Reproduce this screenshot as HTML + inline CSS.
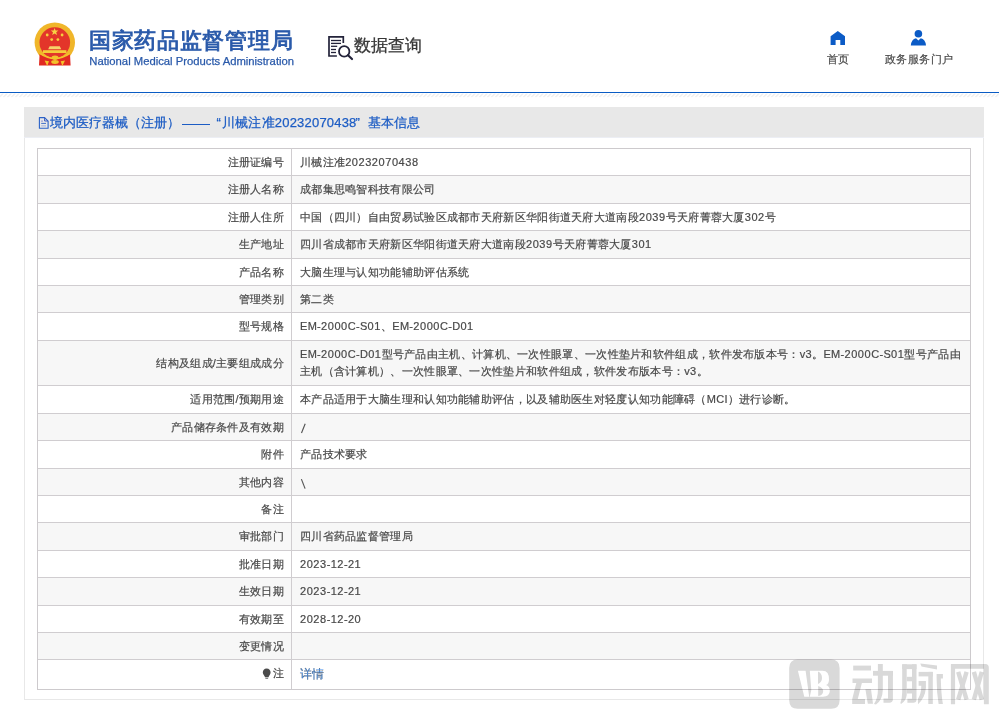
<!DOCTYPE html>
<html><head><meta charset="utf-8">
<style>
html,body{margin:0;padding:0;background:#fff;width:999px;height:719px;overflow:hidden;position:relative;font-family:"Liberation Sans",sans-serif;text-spacing-trim:space-all;}
.a{position:absolute;}
.hd-cn{left:89px;top:25.5px;font-size:22px;font-weight:normal;color:#2a5aaa;-webkit-text-stroke:0.9px #2a5aaa;white-space:nowrap;line-height:30px;letter-spacing:0.7px;}
.hd-en{left:89.3px;top:53.2px;font-size:11.27px;color:#2a5aaa;-webkit-text-stroke:0.25px #2a5aaa;white-space:nowrap;line-height:16px;}
.sjcx{left:353.5px;top:33px;font-size:17px;color:#383838;-webkit-text-stroke:0.3px #383838;white-space:nowrap;line-height:26px;}
.nav{font-size:11px;letter-spacing:0.55px;color:#4a4a4a;-webkit-text-stroke:0.2px #4a4a4a;white-space:nowrap;line-height:14px;}
.blue-line{left:0;top:91.5px;width:999px;height:1.5px;background:#0a5cc4;}
.panel{left:24px;top:107px;width:960px;height:593px;border:1px solid #e8e8e8;border-top:none;box-sizing:border-box;}
.ph{left:24px;top:107px;width:960px;height:30px;background:#e8e8e8;border-bottom:1px solid #eceef4;}
.ptitle{top:114px;font-size:13px;color:#1c5cc4;-webkit-text-stroke:0.25px #1c5cc4;white-space:nowrap;line-height:18px;}
.row{position:absolute;left:37px;width:934px;border-top:1px solid #d0cdd0;box-sizing:border-box;}
.row.g{background:#f7f7f7;}
.lab{position:absolute;right:687px;font-size:11px;letter-spacing:0.3px;line-height:16px;color:#484848;-webkit-text-stroke:0.2px #484848;white-space:nowrap;text-align:right;}
.d{letter-spacing:0.55px;}
.val{position:absolute;left:263px;font-size:11px;letter-spacing:0.3px;line-height:16px;color:#484848;-webkit-text-stroke:0.2px #484848;white-space:nowrap;}
.tb{left:37px;top:148px;width:934px;height:542px;border:1px solid #cdcacd;box-sizing:border-box;}
.vline{left:291px;top:148px;width:1px;height:541px;background:#d0cdd0;}
</style></head><body>

<!-- emblem -->
<svg class="a" style="left:30px;top:18px" width="50" height="52" viewBox="30 18 50 52">
  <circle cx="54.8" cy="42.6" r="20.2" fill="#f0b62a"/>
  <circle cx="54.8" cy="42.6" r="15.3" fill="#e3352a"/>
  <polygon points="54.6,27.9 55.6,30.6 58.4,30.6 56.2,32.3 57,35 54.6,33.4 52.2,35 53,32.3 50.8,30.6 53.6,30.6" fill="#f7d444"/>
  <circle cx="47.2" cy="35" r="1.4" fill="#f5cf3e"/>
  <circle cx="62.1" cy="35" r="1.4" fill="#f5cf3e"/>
  <circle cx="51.7" cy="39.6" r="1.4" fill="#f5cf3e"/>
  <circle cx="57.9" cy="39.6" r="1.4" fill="#f5cf3e"/>
  <polygon points="48.2,49.2 49.6,46.2 59.8,46.2 61.2,49.2" fill="#f7d46a"/>
  <rect x="43" y="50.2" width="23.4" height="2.8" fill="#f5cc3a"/>
  <path d="M39.6 54 L55 60 L70 54 L70.6 65.6 L39 65.6 Z" fill="#e12a22"/>
  <path d="M40.2 53.6 Q55 63.5 69.6 53.6" fill="none" stroke="#f3c22c" stroke-width="1.7"/>
  <ellipse cx="55" cy="57.6" rx="3.4" ry="2" fill="#f3c22c"/>
  <polygon points="44.6,60.4 49,61.2 47.2,66" fill="#f3c22c"/>
  <polygon points="65,60.4 60.6,61.2 62.4,66" fill="#f3c22c"/>
  <ellipse cx="55" cy="62" rx="3.8" ry="1.9" fill="#f3c22c"/>
</svg>
<div class="a hd-cn">国家药品监督管理局</div>
<div class="a hd-en">National Medical Products Administration</div>

<!-- search icon -->
<svg class="a" style="left:320px;top:30px" width="40" height="35" viewBox="320 30 40 35">
  <path d="M336.9 56 H329 V36.9 H343.3 V43.1" fill="none" stroke="#23233a" stroke-width="1.7"/>
  <line x1="331" y1="40.5" x2="341" y2="40.5" stroke="#23233a" stroke-width="1.3"/>
  <line x1="331" y1="43.4" x2="341" y2="43.4" stroke="#23233a" stroke-width="1.3"/>
  <line x1="331" y1="46.3" x2="337.2" y2="46.3" stroke="#23233a" stroke-width="1.3"/>
  <line x1="331" y1="49.5" x2="336" y2="49.5" stroke="#23233a" stroke-width="1.3"/>
  <line x1="331" y1="52.5" x2="336" y2="52.5" stroke="#23233a" stroke-width="1.3"/>
  <circle cx="344.2" cy="51.4" r="5.2" fill="none" stroke="#23233a" stroke-width="1.8"/>
  <line x1="348" y1="55.3" x2="352" y2="59" stroke="#23233a" stroke-width="2.2" stroke-linecap="round"/>
</svg>
<div class="a sjcx">数据查询</div>

<!-- nav -->
<svg class="a" style="left:829px;top:29px" width="18" height="18" viewBox="0 0 18 18">
  <path d="M1.6 7.25 L8.8 1.9 L16 7.25 V15.9 H11.3 V11 H6.6 V15.9 H1.6 Z" fill="#0b5bc6"/>
</svg>
<div class="a nav" style="left:826.6px;top:51.5px">首页</div>
<svg class="a" style="left:909px;top:28px" width="20" height="20" viewBox="0 0 20 20">
  <circle cx="9.4" cy="5.8" r="3.8" fill="#0b5bc6"/>
  <path d="M1.8 17.4 Q2.5 11 7 10.2 L9.4 12.6 L11.8 10.2 Q16.3 11 17 17.4 Z" fill="#0b5bc6"/>
</svg>
<div class="a nav" style="left:884.6px;top:51.5px">政务服务门户</div>

<div class="a blue-line"></div>
<svg class="a" style="left:0;top:93px" width="999" height="5"><defs><pattern id="hp" x="-0.6" y="0" width="4" height="5" patternUnits="userSpaceOnUse"><line x1="3.6" y1="0.6" x2="0.2" y2="4.2" stroke="#dcdcdc" stroke-width="0.9"/></pattern></defs><rect width="999" height="5" fill="url(#hp)"/></svg>

<div class="a panel"></div>
<div class="a ph"></div>
<svg class="a" style="left:34px;top:112px" width="20" height="20" viewBox="34 112 20 20">
  <path d="M39.4 117.6 H44.6 L48.1 121.1 V128.3 H39.4 Z" fill="none" stroke="#2a62c8" stroke-width="1.1" stroke-linejoin="round"/>
  <path d="M44.6 117.6 V121 H48.1" fill="none" stroke="#3a5cc0" stroke-width="1"/>
  <line x1="41.2" y1="121.1" x2="42.8" y2="121.1" stroke="#6a70c8" stroke-width="0.9"/>
  <line x1="41.2" y1="123.4" x2="46" y2="123.4" stroke="#2a5ec4" stroke-width="0.9"/>
  <line x1="41.2" y1="125.9" x2="46" y2="125.9" stroke="#98a8d8" stroke-width="0.9"/>
</svg>
<div class="a ptitle" style="left:50px">境内医疗器械（注册）</div>
<div class="a" style="left:182px;top:123.6px;width:27.5px;height:1.3px;background:#1c5cc4"></div>
<div class="a ptitle" style="left:216.5px">“</div>
<div class="a ptitle" style="left:222px;letter-spacing:0.2px">川械注准20232070438</div>
<div class="a ptitle" style="left:355.5px">”</div>
<div class="a ptitle" style="left:368px">基本信息</div>

<!--ROWS-->
<div class="row" style="top:148px;height:27px"><div class="lab" style="top:5px">注册证编号</div><div class="val" style="top:5px">川械注准<span class="d">20232070438</span></div></div>
<div class="row g" style="top:175px;height:28px"><div class="lab" style="top:5px">注册人名称</div><div class="val" style="top:5px">成都集思鸣智科技有限公司</div></div>
<div class="row" style="top:203px;height:27px"><div class="lab" style="top:5px">注册人住所</div><div class="val" style="top:5px">中国（四川）自由贸易试验区成都市天府新区华阳街道天府大道南段<span class="d">2039</span>号天府菁蓉大厦<span class="d">302</span>号</div></div>
<div class="row g" style="top:230px;height:28px"><div class="lab" style="top:5px">生产地址</div><div class="val" style="top:5px">四川省成都市天府新区华阳街道天府大道南段<span class="d">2039</span>号天府菁蓉大厦<span class="d">301</span></div></div>
<div class="row" style="top:258px;height:27px"><div class="lab" style="top:5px">产品名称</div><div class="val" style="top:5px">大脑生理与认知功能辅助评估系统</div></div>
<div class="row g" style="top:285px;height:27px"><div class="lab" style="top:5px">管理类别</div><div class="val" style="top:5px">第二类</div></div>
<div class="row" style="top:312px;height:28px"><div class="lab" style="top:5px">型号规格</div><div class="val" style="top:5px">EM-<span class="d">2000</span>C-S<span class="d">01</span>、EM-<span class="d">2000</span>C-D<span class="d">01</span></div></div>
<div class="row g" style="top:340px;height:45px"><div class="lab" style="top:14px">结构及组成/主要组成成分</div><div class="val" style="top:4.8px;line-height:17.6px">EM-<span class="d">2000</span>C-D<span class="d">01</span>型号产品由主机、计算机、一次性眼罩、一次性垫片和软件组成，软件发布版本号：v<span class="d">3</span>。EM-<span class="d">2000</span>C-S<span class="d">01</span>型号产品由<br>主机（含计算机）、一次性眼罩、一次性垫片和软件组成，软件发布版本号：v<span class="d">3</span>。</div></div>
<div class="row" style="top:385px;height:28px"><div class="lab" style="top:5px">适用范围/预期用途</div><div class="val" style="top:5px">本产品适用于大脑生理和认知功能辅助评估，以及辅助医生对轻度认知功能障碍（MCI）进行诊断。</div></div>
<div class="row g" style="top:413px;height:27px"><div class="lab" style="top:5px">产品储存条件及有效期</div><div class="val" style="top:5px"><svg style='position:absolute;left:-0.5px;top:0' width='10' height='16' viewBox='299.5 418 10 16'><line x1='301' y1='432' x2='304.7' y2='422.8' stroke='#555' stroke-width='1.15'/></svg></div></div>
<div class="row" style="top:440px;height:28px"><div class="lab" style="top:5px">附件</div><div class="val" style="top:5px">产品技术要求</div></div>
<div class="row g" style="top:468px;height:27px"><div class="lab" style="top:5px">其他内容</div><div class="val" style="top:5px"><svg style='position:absolute;left:-0.5px;top:0' width='10' height='16' viewBox='299.5 473 10 16'><line x1='300.9' y1='478.1' x2='304.6' y2='487.6' stroke='#555' stroke-width='1.15'/></svg></div></div>
<div class="row" style="top:495px;height:27px"><div class="lab" style="top:5px">备注</div><div class="val" style="top:5px"></div></div>
<div class="row g" style="top:522px;height:28px"><div class="lab" style="top:5px">审批部门</div><div class="val" style="top:5px">四川省药品监督管理局</div></div>
<div class="row" style="top:550px;height:27px"><div class="lab" style="top:5px">批准日期</div><div class="val" style="top:5px"><span class="d">2023</span>-<span class="d">12</span>-<span class="d">21</span></div></div>
<div class="row g" style="top:577px;height:28px"><div class="lab" style="top:5px">生效日期</div><div class="val" style="top:5px"><span class="d">2023</span>-<span class="d">12</span>-<span class="d">21</span></div></div>
<div class="row" style="top:605px;height:27px"><div class="lab" style="top:5px">有效期至</div><div class="val" style="top:5px"><span class="d">2028</span>-<span class="d">12</span>-<span class="d">20</span></div></div>
<div class="row g" style="top:632px;height:27px"><div class="lab" style="top:5px">变更情况</div><div class="val" style="top:5px"></div></div>
<div class="row" style="top:659px;height:30px"><div class="lab" style="top:5px"><svg width='10' height='12' viewBox='0 0 10 12' style='vertical-align:-3px;margin-right:1px'><path d='M4.6 0.6 C7.2 0.6 8.6 2.5 8.6 4.5 C8.6 6.4 7 7.4 6.5 9.2 H3 C2.6 7.4 0.8 6.4 0.8 4.5 C0.8 2.5 2.2 0.6 4.6 0.6 Z' fill='#4a4a4a'/><path d='M3.2 9.8 H6.3 L6 11 H3.5 Z' fill='#888'/></svg>注</div><div class="val" style="top:5px"><span style='color:#3d8ef0;font-size:11.6px;letter-spacing:0;position:relative;top:1px'>详情</span></div></div>
<!--/ROWS-->
<div class="a tb"></div>
<div class="a vline"></div>

<svg class="a" style="left:785px;top:655px" width="60" height="60" viewBox="785 655 60 60">
  <path fill="#d9d9d9" style="mix-blend-mode:multiply" fill-rule="evenodd" d="M797.7 659.4 H831.1 Q839.6 659.4 839.6 667.9 V700.3 Q839.6 708.8 831.1 708.8 H797.7 Q789.2 708.8 789.2 700.3 V667.9 Q789.2 659.4 797.7 659.4 Z
  M797.9 670.8 L805.6 670.8 L809.2 696.7 L804.3 696.7 Z
  M809.8 670.8 H822.5 Q829.4 670.8 829 680 Q828.6 684.5 826 685 Q829.8 686 829.8 691 Q829.6 696.7 823 696.7 H809.8 L811.3 690 Z
  "/>
  <path fill="#d9d9d9" style="mix-blend-mode:multiply" d="M818 671.5 Q822 673 822 678 Q822 682 818 684 Z M818.2 686 Q823.2 688 823.2 691 Q823 695.5 818.2 696 Z"/>
</svg>
<svg class="a" style="left:845px;top:655px;mix-blend-mode:multiply" width="154" height="60" viewBox="845 655 154 60">
 <g fill="#d9d9d9">
  <rect x="853.2" y="665.6" width="17.8" height="4.9"/>
  <rect x="852.5" y="678.5" width="19.5" height="4.5"/>
  <polygon points="856.3,683 861.9,683 857.7,699.2 852.2,699.2"/>
  <rect x="852.2" y="699" width="12.8" height="5"/>
  <polygon points="865.4,689.3 871,689.3 873,703.8 867.8,703.8"/>
  <rect x="873" y="670.9" width="19.9" height="4.8"/>
  <path d="M877.9 663.9 H882.8 V690 Q882.5 700 876 704.5 L874 704 Q877.9 698 877.9 690 Z"/>
  <path d="M888 670.9 H892.9 V699 Q892.9 702.8 889.3 702.8 H883.5 V698.6 H888 Z"/>
  <path d="M902.2 664.3 H906.7 V695 Q906 701 901 704 L900.4 703 Q902.2 698 902.2 692 Z"/>
  <rect x="902.2" y="664.3" width="14.3" height="4.8"/>
  <path d="M912 664.3 H916.5 V699.5 Q916.5 702.8 913.3 702.8 H907.4 V698.8 H912 Z"/>
  <rect x="906.7" y="676.8" width="5.3" height="4.5"/>
  <rect x="906.7" y="688.6" width="5.3" height="4.9"/>
  <path d="M920.3 663.4 Q929 664.5 937 665.6 V669.4 Q929 668 921.5 666.4 Z"/>
  <rect x="918.6" y="671.9" width="14.2" height="4.5"/>
  <rect x="928.3" y="671.9" width="4.5" height="32.1"/>
  <path d="M918.6 681 H925.9 V688 Q925 698 918 704.2 L917.9 699 Q921.3 694 921.3 685.8 H918.6 Z"/>
  <path d="M936.6 674 H942.9 V678.5 H940.8 Q941.2 695 942.9 704 H938.6 Q936.6 692 936.6 678 Z"/>
  <path d="M950.9 704.2 V663.9 H985.3 Q988.8 663.9 988.8 667.4 V704.2 H983.9 V668.8 H955.1 V704.2 Z"/>
 </g>
 <g stroke="#d9d9d9" stroke-width="4.4">
  <line x1="958.2" y1="671.9" x2="966.6" y2="699.7"/>
  <line x1="966.6" y1="671.9" x2="958.2" y2="699.7"/>
  <line x1="973.9" y1="671.9" x2="981.8" y2="699.7"/>
  <line x1="981.8" y1="671.9" x2="973.9" y2="699.7"/>
 </g>
</svg>
</body></html>
